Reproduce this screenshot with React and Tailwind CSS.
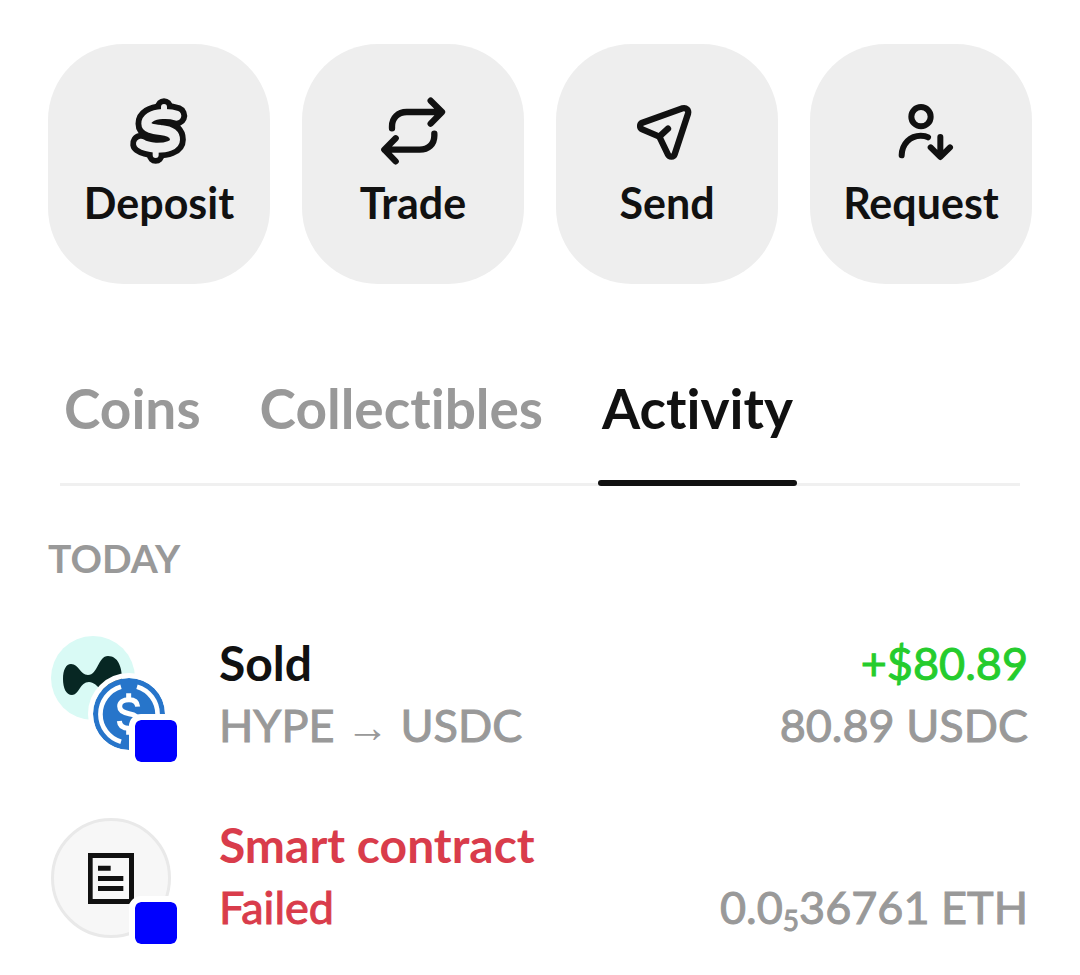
import React, { useState } from "react";

function DepositIcon() {
  const letra =
    "M160 62C150 58 135 56 118 57C86 59 70 71 70 86C70 99 88 102 113 105C144 108 156 118 156 134C156 150 132 159 98 158C80 157 64 153 54 146";
  return (
    <svg viewBox="0 0 216 216" className="size-18" fill="none" strokeLinecap="round" strokeLinejoin="round">
      <path d="M123 36V60M98 180V158" stroke="#111111" strokeWidth="53" />
      <path d={letra} stroke="#111111" strokeWidth="65" />
      <path d={letra} stroke="#eeeeee" strokeWidth="30" />
      <path d="M123 36V60M98 180V158" stroke="#eeeeee" strokeWidth="18" />
    </svg>
  );
}

function TradeIcon() {
  return (
    <svg viewBox="0 0 216 216" className="size-18" fill="none" stroke="currentColor" strokeWidth="19" strokeLinecap="round" strokeLinejoin="round">
      <path d="M45 100V94C45 68 63 51 89 51H194M161 17L195 51L161 86" />
      <path d="M172 116V122C172 148 154 164 128 164H23M56 130L22 164L56 199" />
    </svg>
  );
}

function SendIcon() {
  return (
    <svg viewBox="0 0 216 216" className="size-18" fill="none" stroke="currentColor" strokeWidth="19" strokeLinecap="round" strokeLinejoin="round">
      <path d="M34 83L155 40C165 37 174 45 171 56L131 178C128 187 115 187 111 179L85 125L34 103C25 99 25 87 34 83Z" />
      <path d="M85 125L111 101" />
    </svg>
  );
}

function RequestIcon() {
  return (
    <svg viewBox="0 0 216 216" className="size-18" fill="none" stroke="currentColor" strokeWidth="18" strokeLinecap="round" strokeLinejoin="round">
      <circle cx="108" cy="65" r="29" />
      <path d="M50 181C51 146 76 122 107 122C116 122 123 123 129 127" />
      <path d="M166 126V184M137 157L166 186L195 157" />
    </svg>
  );
}

function HypeLogo() {
  return (
    <svg viewBox="0 0 84 84" className="size-21">
      <circle cx="42" cy="42" r="42" fill="#d9faf5" />
      <path
        d="M12 43C12 34 15 28 20 28C28 28 29 39 37 39C47 39 47 20 57 20C67 20 71 31 71 43C71 54 68 61 61 61C52 61 47 46 38 46C29 46 28 59 21 59C15 59 12 52 12 43Z"
        fill="#072723"
      />
    </svg>
  );
}

function UsdcLogo() {
  return (
    <svg viewBox="0 0 216 216" className="size-18" fill="none" stroke="#ffffff">
      <circle cx="108" cy="108" r="108" fill="#2775ca" stroke="none" />
      <path d="M84 26A86 86 0 0 0 84 191M132 26A86 86 0 0 1 132 191" strokeWidth="14" />
      <path d="M107 46V66M107 150V170" strokeWidth="15" />
      <path
        d="M134 86C133 73 124 65 108 65C90 65 80 73 80 85C80 99 90 104 108 107C126 110 136 115 136 130C136 143 125 151 108 151C90 151 80 143 79 129"
        strokeWidth="15"
      />
    </svg>
  );
}

function DocumentoIcon() {
  return (
    <svg viewBox="0 0 138 153" className="h-[51px] w-[46px]" fill="#111111">
      <path fillRule="evenodd" d="M0 0H138V138L123 153H0ZM14 15V138H123V15Z" />
      <path d="M30 38H68V53H30ZM30 69H106V84H30ZM30 99H106V114H30Z" />
    </svg>
  );
}

function Badge() {
  return (
    <span className="absolute right-0 bottom-0 size-[42px] rounded-md bg-[#0000ff] outline-6 outline-white" />
  );
}

const acoes = [
  { nome: "Deposit", Icone: DepositIcon },
  { nome: "Trade", Icone: TradeIcon },
  { nome: "Send", Icone: SendIcon },
  { nome: "Request", Icone: RequestIcon },
];

const abas = ["Coins", "Collectibles", "Activity"];

export default function App() {
  const [abaAtiva, setAbaAtiva] = useState("Activity");

  return (
    <main className="min-h-screen bg-white px-12 pt-11 font-[Lato,sans-serif] text-[#111111] [font-variant-ligatures:none]">
      {/* Ações */}
      <div className="grid grid-cols-4 gap-8">
        {acoes.map(({ nome, Icone }) => (
          <button
            key={nome}
            className="flex h-60 flex-col items-center rounded-[76px] bg-[#eeeeee] pt-[51px]"
          >
            <Icone />
            <span className="mt-3 text-[43px] leading-[48px] font-bold">{nome}</span>
          </button>
        ))}
      </div>

      {/* Abas */}
      <div role="tablist" className="mx-3 mt-[92px] flex gap-[51px] border-b-3 border-[#f0f0f0]">
        {abas.map((aba) => (
          <button
            key={aba}
            role="tab"
            aria-selected={aba === abaAtiva}
            onClick={() => setAbaAtiva(aba)}
            className={`relative h-[107px] px-1 pb-[46px] text-[55px] leading-[64px] font-bold ${
              aba === abaAtiva ? "text-[#111111]" : "text-[#999999]"
            }`}
          >
            {aba}
            {aba === abaAtiva && (
              <span className="absolute inset-x-0 -bottom-[3px] h-1.5 rounded-full bg-[#111111]" />
            )}
          </button>
        ))}
      </div>

      {/* Atividade */}
      <h2 className="mt-12 text-[39px] leading-[48px] font-bold text-[#999999]">TODAY</h2>
      <ul className="mt-[54px] flex flex-col gap-14 pr-1">
        <li className="flex gap-[42px]">
          <div className="relative ml-[3px] size-[126px] shrink-0">
            <HypeLogo />
            <span className="absolute top-[42px] left-[42px] rounded-full outline-5 outline-white">
              <UsdcLogo />
            </span>
            <Badge />
          </div>
          <div className="-mt-1 grow leading-[62px]">
            <p className="text-[48px] font-bold">Sold</p>
            <p className="text-[45px] text-[#999999] [-webkit-text-stroke:1px]">
              HYPE{" "}
              <span className="font-['Liberation_Serif',serif] text-[43px] [-webkit-text-stroke:0px]">→</span>{" "}
              USDC
            </p>
          </div>
          <div className="-mt-1 text-right text-[45px] leading-[62px] [-webkit-text-stroke:1px]">
            <p className="text-[#25cc2d]">+$80.89</p>
            <p className="text-[#999999]">80.89 USDC</p>
          </div>
        </li>
        <li className="flex gap-[42px]">
          <div className="relative ml-[3px] size-[126px] shrink-0">
            <div className="flex size-30 items-center justify-center rounded-full border-3 border-[#e9e9e9] bg-[#f7f7f7]">
              <DocumentoIcon />
            </div>
            <Badge />
          </div>
          <div className="-mt-1 grow leading-[62px] text-[#d93c4b]">
            <p className="text-[48px] font-bold">Smart contract</p>
            <p className="text-[45px] [-webkit-text-stroke:1px]">Failed</p>
          </div>
          <p className="-mt-1 pt-[62px] text-right text-[45px] leading-[62px] text-[#999999] [-webkit-text-stroke:1px]">
            0.0<sub className="text-[28px]">5</sub>36761 ETH
          </p>
        </li>
      </ul>
    </main>
  );
}
